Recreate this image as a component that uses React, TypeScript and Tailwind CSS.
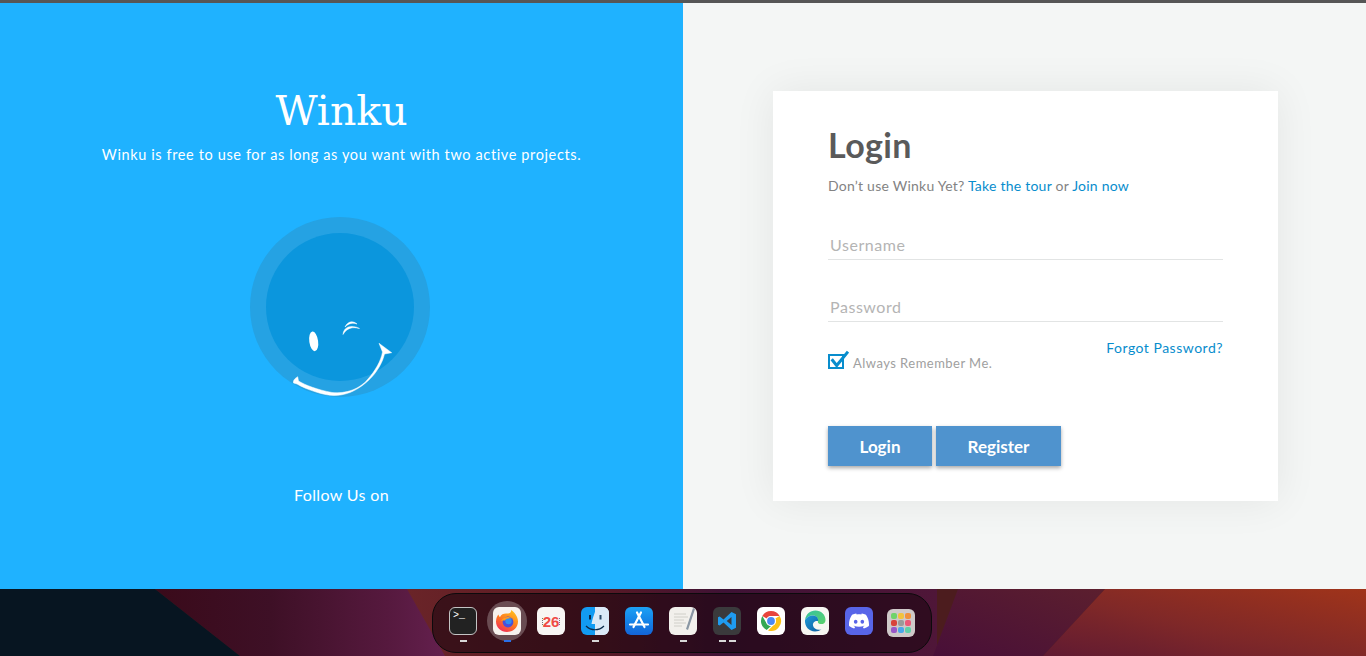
import { SiDiscord } from 'react-icons/si'

const muli = "font-['Lato','Noto_Sans',sans-serif]"

const Smiley = () => (
  <svg width="180" height="181" viewBox="0 0 180 181" className="mt-[52px] -ml-[4px]">
    <circle cx="90" cy="90" r="90" fill="#25a2e3" />
    <circle cx="90" cy="90" r="74" fill="#0b96dd" />
    <ellipse cx="63.7" cy="124.3" rx="4.4" ry="9.9" transform="rotate(-8 63.7 124.3)" fill="#fff" />
    <g fill="#fff" stroke="#fff" strokeWidth="0.5">
      <path d="M93 117.5 C93.5 110 101 107 109.5 111.5 C102 109.5 97 111 93 117.5 Z" />
      <path d="M95 110 C98 104 103 103.5 107 107 C103 105.5 99 106 95 110 Z" />
      <path d="M129 126.3 L141.7 135.7 L134.5 137 C131 152 118 168 100 175.5 C88 180 78 179 66 175 C58 172.5 52 170 47 167 L43.5 166 C43 163 45 161.5 47.7 159.7 L48.5 164 C55 168 68 173 82 175.5 C96 177 110 172 118 162 C125 154 131 144 132.5 135 Z" />
    </g>
  </svg>
)

const Wallpaper = () => (
  <svg className="absolute inset-0" width="1366" height="67" viewBox="0 0 1366 67">
    <defs>
      <linearGradient id="wine" x1="0" y1="0" x2="1" y2="0">
        <stop offset="0" stopColor="#3a0a1a" />
        <stop offset="0.4" stopColor="#3e1026" />
        <stop offset="0.8" stopColor="#56193e" />
        <stop offset="1" stopColor="#64204e" />
      </linearGradient>
      <linearGradient id="panel" x1="0" y1="1" x2="1" y2="0">
        <stop offset="0" stopColor="#480f38" />
        <stop offset="1" stopColor="#5c1f2e" />
      </linearGradient>
      <linearGradient id="rust" x1="0" y1="1" x2="1" y2="0">
        <stop offset="0" stopColor="#601a32" />
        <stop offset="0.45" stopColor="#7f2828" />
        <stop offset="1" stopColor="#a0341a" />
      </linearGradient>
      <linearGradient id="mid" x1="0" y1="0" x2="1" y2="0">
        <stop offset="0" stopColor="#6a2428" />
        <stop offset="0.35" stopColor="#5a1a24" />
        <stop offset="0.6" stopColor="#3f1235" />
        <stop offset="1" stopColor="#4f1638" />
      </linearGradient>
    </defs>
    <rect width="1366" height="67" fill="#4c1c1e" />
    <rect x="407" width="530" height="67" fill="url(#mid)" />
    <path d="M155 0 L407 0 L445 67 L240 67 Z" fill="url(#wine)" />
    <path d="M0 0 L155 0 L240 67 L0 67 Z" fill="#071521" />
    <path d="M958 0 L1105 0 L1043 67 L933 67 Z" fill="url(#panel)" />
    <path d="M1105 0 L1366 0 L1366 67 L1043 67 Z" fill="url(#rust)" />
  </svg>
)

const Tile = ({ children, className }: { children: React.ReactNode; className: string }) => (
  <div className={`w-7 h-7 rounded-[6px] overflow-hidden flex items-center justify-center ${className}`}>{children}</div>
)

const Pips = ({ color = 'bg-[#d8d8d8]', count = 1 }: { color?: string; count?: number }) => (
  <div className="absolute left-0 right-0 top-[33px] flex justify-center gap-[3px]">
    {Array.from({ length: count }).map((_, i) => (
      <span key={i} className={`w-[7px] h-[2px] ${color}`} />
    ))}
  </div>
)

const Firefox = () => (
  <svg width="24" height="24" viewBox="0 0 24 24">
    <defs>
      <linearGradient id="ff" x1="0.8" y1="0" x2="0.2" y2="1">
        <stop offset="0" stopColor="#ffc21f" />
        <stop offset="0.5" stopColor="#ff7a1e" />
        <stop offset="1" stopColor="#f0285c" />
      </linearGradient>
    </defs>
    <path d="M16 1 C19 3 23 7 23 12.5 C23 18.5 18 23 12 23 C6 23 1 18.5 1 12.5 C1 9 2.5 6.5 3.5 5.5 C3.8 7 4.5 7.8 5 8 C6 5.5 8.5 4.5 11 4.5 C13.5 4.5 16.5 4 16 1 Z" fill="url(#ff)" />
    <circle cx="13" cy="13" r="5.4" fill="#4a4fd8" />
    <circle cx="13.5" cy="12" r="3.2" fill="#2f8df0" />
    <path d="M6 12 C8 7.5 14 7 17.5 9.5 C14 8.8 11 9.5 10 11.5 C8.5 11.5 7 11.5 6 12 Z" fill="#ff9a1e" />
  </svg>
)

const Chrome = () => (
  <svg width="24" height="24" viewBox="0 0 24 24">
    <path d="M12 2 A10 10 0 0 1 20.66 7 L12 7 A5 5 0 0 0 7.67 9.5 L3.34 7 A10 10 0 0 1 12 2 Z" fill="#e8453c" />
    <path d="M3.34 7 L7.67 14.5 A5 5 0 0 0 12 17 L7.67 21 A10 10 0 0 1 3.34 7 Z" fill="#34a853" />
    <path d="M20.66 7 A10 10 0 0 1 9 21.54 L14.5 16.3 A5 5 0 0 0 16.33 9.5 L20.66 7 Z" fill="#fbc116" />
    <circle cx="12" cy="12" r="5" fill="#fff" />
    <circle cx="12" cy="12" r="3.9" fill="#4a8af4" />
  </svg>
)

const Edge = () => (
  <svg width="24" height="24" viewBox="0 0 24 24">
    <defs>
      <linearGradient id="eb" x1="0" y1="0" x2="1" y2="1">
        <stop offset="0" stopColor="#1f9ad8" />
        <stop offset="1" stopColor="#0c5c9e" />
      </linearGradient>
      <linearGradient id="eg" x1="0" y1="0" x2="1" y2="1">
        <stop offset="0" stopColor="#35c1a0" />
        <stop offset="1" stopColor="#5bd26a" />
      </linearGradient>
    </defs>
    <path d="M2 11 C3 5 7 1.5 12.5 1.5 C18 1.5 22.5 5.5 22.5 11 C22.5 14.5 19.5 15.5 17 15 C15 14.6 14.5 13 15 12 C15.5 9 13 6.5 10 6.5 C6.5 6.5 3.5 8.5 2 11 Z" fill="url(#eg)" />
    <path d="M2 11 C4 7.5 7.5 6.3 10.5 6.5 C14 6.8 15.5 9.8 15 12 C12 11.5 9.5 13.5 10 16.5 C10.5 19.5 14 21.5 18.5 20.5 C16.5 21.8 14.5 22.5 12 22.5 C6 22.5 1.5 17.5 2 11 Z" fill="url(#eb)" />
  </svg>
)

const Launchpad = () => {
  const dots = ['bg-[#6fd36a]', 'bg-[#f2c23c]', 'bg-[#f0913c]', 'bg-[#d8443c]', 'bg-[#9a9a9a]', 'bg-[#ea5a78]', 'bg-[#9a58c8]', 'bg-[#4aa8ea]', 'bg-[#5fd0a8]']
  return (
    <div className="grid grid-cols-3 gap-[1px]">
      {dots.map(d => (
        <span key={d} className={`w-[6px] h-[6px] rounded-[2px] ${d}`} />
      ))}
    </div>
  )
}

const Dock = () => (
  <div className="relative h-[67px] overflow-hidden">
    <Wallpaper />
    <div className="absolute left-[432px] top-[4px] w-[500px] h-[60px] rounded-[24px] border border-[#0c0a0c] bg-[#1c0610]/60 pl-[16px] flex items-start pt-[13px] gap-[16px]">
      <div className="relative">
        <Tile className="bg-[#222] border-[1.5px] border-[#c4c4c4] items-start justify-start">
          <span className="font-['Liberation_Mono',monospace] text-[10px] leading-[10px] text-white pl-[3px] pt-[3px]">&gt;_</span>
        </Tile>
        <Pips />
      </div>
      <div className="relative">
        <div className="absolute -left-[6px] -top-[6px] w-10 h-10 rounded-full bg-white/25" />
        <Tile className="relative bg-[#f7f2ee]">
          <Firefox />
        </Tile>
        <Pips color="bg-[#2a6fe8]" />
      </div>
      <div className="relative">
        <Tile className="bg-[#f8f6f4]">
          <span className="w-[1px] h-[7px] border-l border-dotted border-[#777]" />
          <span className="font-['Liberation_Sans',sans-serif] font-bold text-[15px] leading-[15px] text-[#ef4b45]">26</span>
          <span className="w-[1px] h-[7px] border-l border-dotted border-[#777]" />
        </Tile>
      </div>
      <div className="relative">
        <Tile className="bg-gradient-to-r from-[#129bf2] from-50% to-[#dbe9f7] to-50%">
          <svg width="28" height="28" viewBox="0 0 28 28">
            <path d="M16 0 C13 7 11 13 10.5 17 L14.5 17 L15 28 L28 28 L28 0 Z" fill="#dbe9f7" />
            <rect x="8" y="8" width="2" height="4.5" fill="#0b2a4a" />
            <rect x="18.5" y="8" width="2" height="4.5" fill="#2a4a6a" />
            <path d="M5 19 C10 24 18 24 23 19" fill="none" stroke="#0b2a4a" strokeWidth="1.2" />
          </svg>
        </Tile>
        <Pips />
      </div>
      <div className="relative">
        <Tile className="bg-gradient-to-b from-[#1da1f5] to-[#1464d8]">
          <svg width="24" height="24" viewBox="0 0 24 24" fill="none" stroke="#fff" strokeWidth="2.2" strokeLinecap="round">
            <path d="M14 3.5 L6.5 18" />
            <path d="M10 3.5 L17.5 18" />
            <path d="M3 15.5 L21 15.5" />
          </svg>
        </Tile>
      </div>
      <div className="relative">
        <Tile className="bg-[#f2f0ec]">
          <svg width="28" height="28" viewBox="0 0 28 28" fill="none">
            <path d="M5 7 H17 M5 10 H19 M5 13 H15 M5 16 H17 M5 19 H13" stroke="#c8c6c2" strokeWidth="0.8" />
            <path d="M24 1 L17 22 L19 23 L26 2 Z" fill="#8a97a4" />
          </svg>
        </Tile>
        <Pips />
      </div>
      <div className="relative">
        <Tile className="bg-[#3a3a3c]">
          <svg width="20" height="20" viewBox="0 0 20 20">
            <path d="M14.5 1 L19 3.2 V16.8 L14.5 19 L6.5 11.6 L2.7 14.6 L1 13.7 V6.3 L2.7 5.4 L6.5 8.4 Z M14.5 6 L9.7 10 L14.5 14 Z" fill="#1f9cf0" fillRule="evenodd" />
          </svg>
        </Tile>
        <Pips count={2} />
      </div>
      <div className="relative">
        <Tile className="bg-white">
          <Chrome />
        </Tile>
      </div>
      <div className="relative">
        <Tile className="bg-[#f7f7f2]">
          <Edge />
        </Tile>
      </div>
      <div className="relative">
        <Tile className="bg-[#5865e8]">
          <SiDiscord size={20} color="#fff" />
        </Tile>
      </div>
      <div className="relative -ml-[2px] mt-[2px]">
        <Tile className="bg-[#cfc9c9]">
          <Launchpad />
        </Tile>
      </div>
    </div>
  </div>
)

export default function App() {
  return (
    <div className={`w-[1366px] h-[656px] overflow-hidden ${muli}`}>
      <div className="h-[3px] bg-[#565656]" />
      <div className="flex h-[586px]">
        <div className="w-[683px] bg-[#1fb2ff] flex flex-col items-center text-white pt-[83px]">
          <h1 className="font-['DejaVu_Serif','Liberation_Serif',serif] text-[41px] leading-[50px]">Winku</h1>
          <p className="mt-[9px] text-[14.5px] leading-[20px] tracking-[0.62px]">
            Winku is free to use for as long as you want with two active projects.
          </p>
          <Smiley />
          <p className="mt-[85px] text-[16px] leading-[24px] tracking-[0.35px]">Follow Us on</p>
        </div>
        <div className="flex-1 bg-[#f4f6f5] pl-[90px] pt-[88px]">
          <div className="w-[505px] h-[410px] bg-white shadow-[0_0_40px_rgba(0,0,0,0.07)] px-[55px] pt-[32px]">
            <h2 className="text-[34px] leading-[44px] font-bold tracking-[0.4px] text-[#5a5a5a]">Login</h2>
            <p className="mt-[9px] text-[14px] leading-[20px] tracking-[0.24px] text-[#838383]">
              Don’t use Winku Yet? <a className="text-[#088dcd]">Take the tour</a> or <a className="text-[#088dcd]">Join now</a>
            </p>
            <div className="mt-[36px] h-[28px] border-b border-[#e2e4e4] pl-[2px] pt-[1px] text-[16px] leading-[24px] tracking-[0.55px] text-[#b4b4b4]">Username</div>
            <div className="mt-[34px] h-[28px] border-b border-[#e2e4e4] pl-[2px] pt-[1px] text-[16px] leading-[24px] tracking-[0.55px] text-[#b4b4b4]">Password</div>
            <div className="flex justify-between">
              <div className="flex items-start mt-[28px]">
                <svg width="21" height="20" viewBox="0 0 21 20" fill="none">
                  <rect x="1" y="5" width="14" height="13" stroke="#088dcd" strokeWidth="2" />
                  <path d="M3.7 9.3 L8.7 15.5 L20 1.7" stroke="#088dcd" strokeWidth="3" />
                </svg>
                <span className="ml-[4px] mt-[4px] text-[13px] leading-[18px] tracking-[0.47px] text-[#a0a0a0]">Always Remember Me.</span>
              </div>
              <a className="mt-[16px] text-[14px] leading-[20px] tracking-[0.5px] text-[#088dcd]">Forgot Password?</a>
            </div>
            <div className="flex gap-[4px] mt-[54px]">
              <button className="w-[104px] h-[40px] pt-[2px] bg-[#4f93ce] text-white text-[17px] font-bold shadow-[0_2px_4px_rgba(0,0,0,0.35)]">Login</button>
              <button className="w-[125px] h-[40px] pt-[2px] bg-[#4f93ce] text-white text-[17px] font-bold shadow-[0_2px_4px_rgba(0,0,0,0.35)]">Register</button>
            </div>
          </div>
        </div>
      </div>
      <Dock />
    </div>
  )
}
